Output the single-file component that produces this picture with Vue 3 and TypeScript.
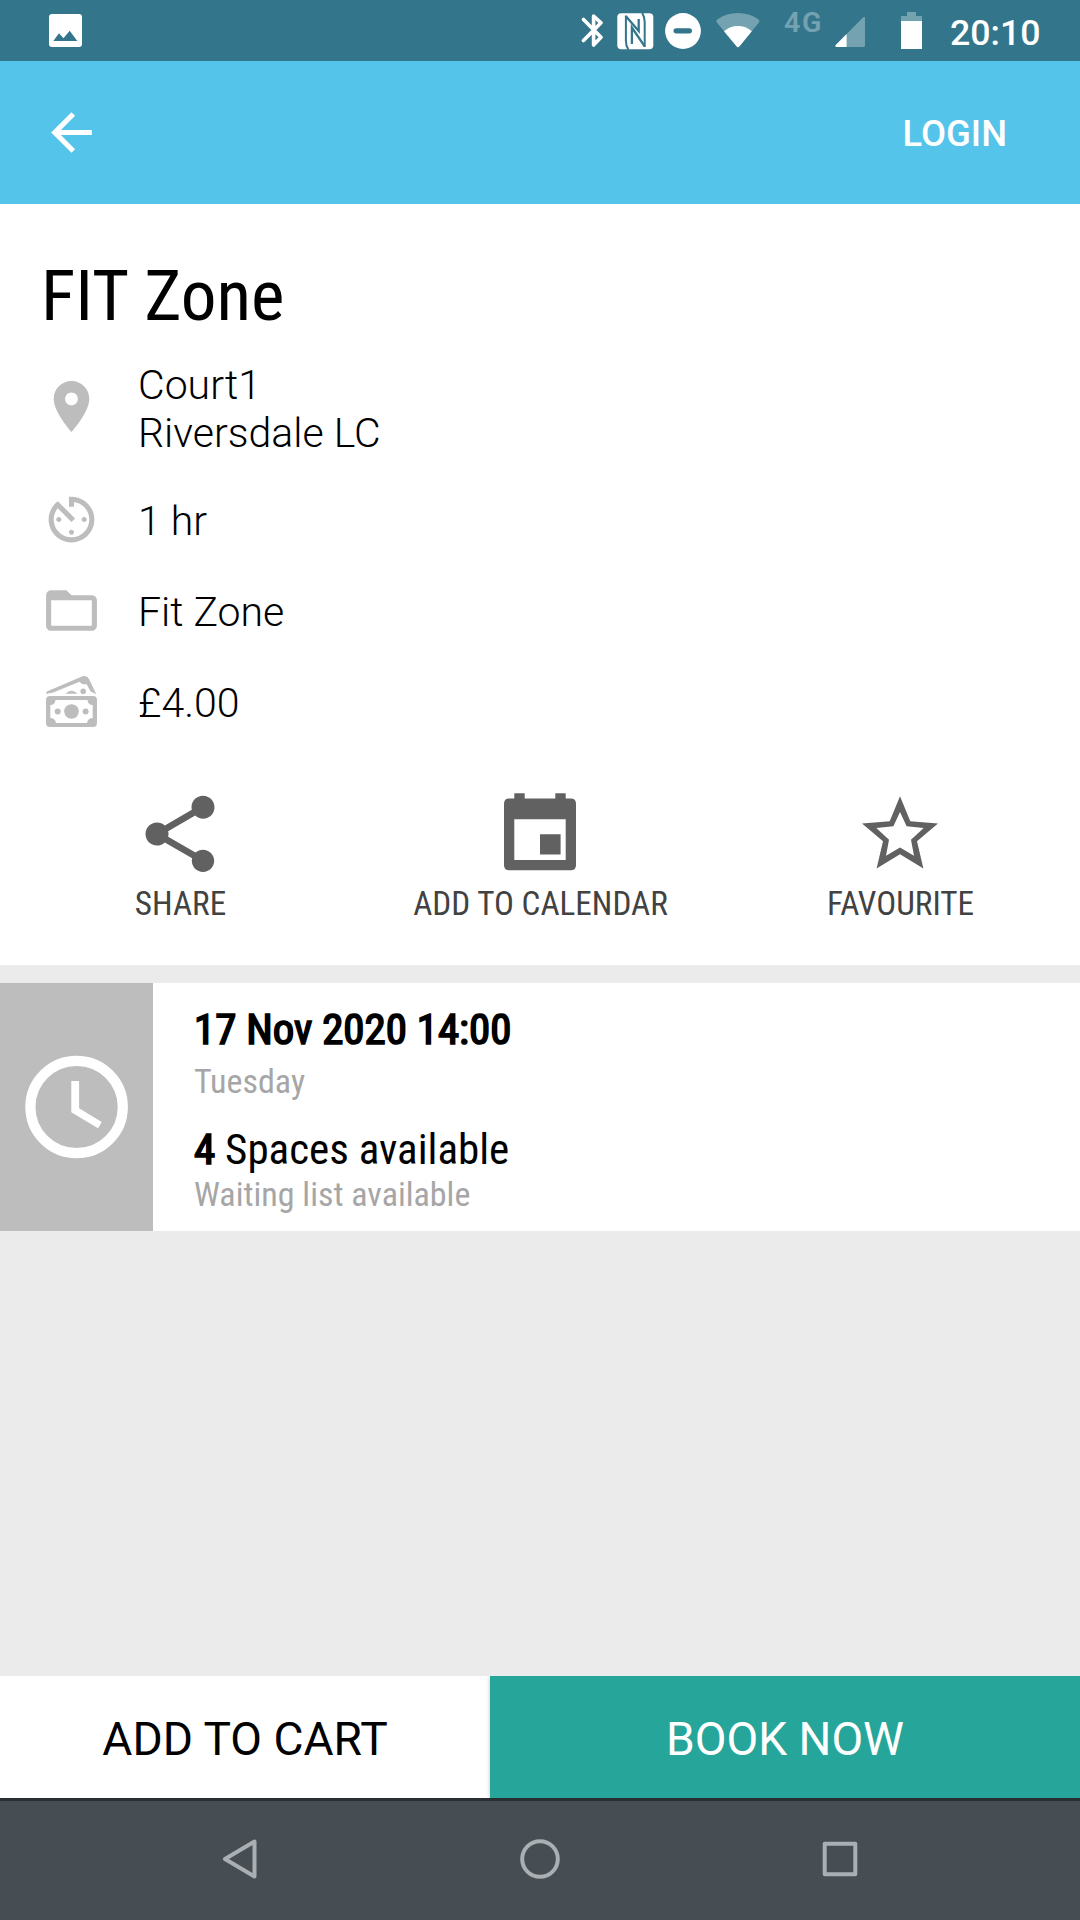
<script setup lang="ts">
interface Detail {
  icon: 'place' | 'timer' | 'folder' | 'money'
  lines: string[]
}

const details: Detail[] = [
  { icon: 'place', lines: ['Court1', 'Riversdale LC'] },
  { icon: 'timer', lines: ['1 hr'] },
  { icon: 'folder', lines: ['Fit Zone'] },
  { icon: 'money', lines: ['£4.00'] },
]
</script>

<template>
  <div class="screen">
    <header class="status">
      <svg class="picture" width="34" height="34" viewBox="0 0 34 34">
        <rect x="0" y="0" width="33" height="33" rx="3" fill="#fff" />
        <path d="M4.3 27 10 19.3 14.5 24.3 20.7 16.7 28.3 27z" fill="#33768c" />
      </svg>
      <div class="status-icons">
        <svg class="bt" width="24" height="37" viewBox="0 0 24 37" fill="none" stroke="#fff" stroke-width="3.6" stroke-linecap="round" stroke-linejoin="round">
          <path d="M2.5 7.5 20 25.2 12.6 33V4l7.4 6.8L2.5 28.5" />
        </svg>
        <svg class="nfc" width="37" height="37" viewBox="0 0 37 37">
          <rect x="0.3" y="0.3" width="36" height="36" rx="4" fill="#fff" />
          <path d="M8.9 2.6V28Q8.9 33 11.4 36.6M27.7 34V9Q27.7 4 25.2 0" fill="none" stroke="#33768c" stroke-width="2" />
          <path d="M8.9 3.2 21.7 18V6M14.9 31V14.6L27.7 33.4" fill="none" stroke="#33768c" stroke-width="2.3" />
        </svg>
        <svg class="dnd" width="36" height="36" viewBox="0 0 36 36">
          <circle cx="18" cy="18" r="17.9" fill="#fff" />
          <rect x="8.5" y="15.2" width="18.5" height="5.2" rx="2.6" fill="#33768c" />
        </svg>
        <svg class="wifi" width="44" height="35" viewBox="0 0 44 35" fill="#fff">
          <path d="M.7 9.2Q-.2 7.4 1.6 6.2 10.5 0 22 0T42.2 6.2Q44 7.4 42.9 9.4L23.5 33.3Q22 35 20.5 33.3z" opacity=".32" />
          <path d="M8 18.3Q14 13 22 13T35.8 18.3L23.5 33.3Q22 35 20.5 33.3z" />
        </svg>
        <span class="net">4G</span>
        <svg class="signal" width="31" height="31" viewBox="0 0 31 31" fill="#fff">
          <path d="M30 1V28.5Q30 30 28.5 30H1.5Q-.4 29.6.8 28L28 .6Q30-1 30 1z" opacity=".32" />
          <path d="M11.6 17V30H1.5Q-.4 29.6.8 28z" />
        </svg>
        <svg class="battery" width="21" height="37" viewBox="0 0 21 37" fill="#fff">
          <path d="M6 0h9v4h6v5H0V4h6z" opacity=".32" />
          <path d="M0 9h21v28H0z" />
        </svg>
        <span class="time">20:10</span>
      </div>
    </header>

    <nav class="appbar">
      <svg width="61" height="61" viewBox="0 0 24 24" fill="#fff">
        <path d="M20 11H7.83l5.59-5.59L12 4l-8 8 8 8 1.41-1.41L7.83 13H20v-2z" />
      </svg>
      <span class="login">LOGIN</span>
    </nav>

    <section class="summary">
      <h1 class="title">FIT Zone</h1>
      <ul class="details">
        <li v-for="d in details" :key="d.icon" :class="['row', d.icon]">
          <svg v-if="d.icon === 'place'" width="61" height="61" viewBox="0 0 24 24">
            <path d="M12 2C8.13 2 5 5.13 5 9c0 5.25 7 13 7 13s7-7.75 7-13c0-3.87-3.13-7-7-7zm0 9.5c-1.38 0-2.5-1.12-2.5-2.5s1.12-2.5 2.5-2.5 2.5 1.12 2.5 2.5-1.12 2.5-2.5 2.5z" />
          </svg>
          <svg v-else-if="d.icon === 'timer'" width="61" height="61" viewBox="0 0 24 24">
            <path d="M11 17c0 .55.45 1 1 1s1-.45 1-1-.45-1-1-1-1 .45-1 1zm0-14v4h2V5.08c3.39.49 6 3.39 6 6.92 0 3.87-3.13 7-7 7s-7-3.13-7-7c0-1.68.59-3.22 1.58-4.42L12 13l1.41-1.41-6.8-6.8v.02C4.42 6.45 3 9.05 3 12c0 4.97 4.02 9 9 9 4.97 0 9-4.03 9-9s-4.03-9-9-9h-1zm7 9c0-.55-.45-1-1-1s-1 .45-1 1 .45 1 1 1 1-.45 1-1zM6 12c0 .55.45 1 1 1s1-.45 1-1-.45-1-1-1-1 .45-1 1z" />
          </svg>
          <svg v-else-if="d.icon === 'folder'" width="61" height="61" viewBox="0 0 24 24">
            <path d="M20 6h-8l-2-2H4c-1.1 0-1.99.9-1.99 2L2 18c0 1.1.9 2 2 2h16c1.1 0 2-.9 2-2V8c0-1.1-.9-2-2-2zm0 12H4V8h16v10z" />
          </svg>
          <svg v-else width="61" height="61" viewBox="0 0 61 61">
            <path fill-rule="evenodd" d="M9 25H52Q56 25 56 29V52Q56 56 52 56H9Q5 56 5 52V29Q5 25 9 25zM14.5 29Q14 34 9.3 34V47Q14 47 15 52H46Q47 47 51.7 47V34Q47 34 46.5 29z" />
            <circle cx="30.5" cy="40.5" r="7.3" />
            <circle cx="16.7" cy="40.5" r="3" />
            <circle cx="44.6" cy="40.5" r="3" />
            <path fill-rule="evenodd" d="M5 23 5.8 20.6 41.5 5.3Q46 4 48 8L55.3 23.2 49.6 20.5 45.5 13Q41.5 14.5 38.5 10.8L12.3 21.5z" />
            <circle cx="42.2" cy="20.3" r="2.8" />
            <path d="M24.5 22.8Q30.5 16.5 36.5 22.8z" />
          </svg>
          <div class="lines">
            <span v-for="l in d.lines" :key="l">{{ l }}</span>
          </div>
        </li>
      </ul>

      <div class="actions">
        <button class="action">
          <svg width="92" height="92" viewBox="0 0 24 24">
            <path d="M18 16.08c-.76 0-1.44.3-1.96.77L8.91 12.7c.05-.23.09-.46.09-.7s-.04-.47-.09-.7l7.05-4.11c.54.5 1.25.81 2.04.81 1.66 0 3-1.34 3-3s-1.34-3-3-3-3 1.34-3 3c0 .24.04.47.09.7L8.04 9.81C7.5 9.31 6.79 9 6 9c-1.66 0-3 1.34-3 3s1.34 3 3 3c.79 0 1.5-.31 2.04-.81l7.12 4.16c-.05.21-.08.43-.08.65 0 1.61 1.31 2.92 2.92 2.92 1.61 0 2.92-1.31 2.92-2.92s-1.31-2.92-2.92-2.92z" />
          </svg>
          <span class="label">SHARE</span>
        </button>
        <button class="action">
          <svg width="92" height="92" viewBox="0 0 92 92">
            <path fill-rule="evenodd" d="M20.3 5.3h10.4v5.2h30.6V5.3h10.4v5.2h5Q82 10.5 82 15.8V77.2Q82 82.3 76.8 82.3H15.2Q10 82.3 10 77.2V15.8Q10 10.5 15.2 10.5h5.1zM20.3 31.2V72h51.4V31.2zM46 46.2h20.6V66.6H46z" />
          </svg>
          <span class="label">ADD TO CALENDAR</span>
        </button>
        <button class="action">
          <svg width="92" height="92" viewBox="0 0 92 92">
            <path fill-rule="evenodd" d="M46 8.3 56.3 33.3 84 35.6 63 53.3 69.4 80.4 46 66.2 22.6 80.4 29 53.3 8 35.6 35.7 33.3zM46 24 39.4 38.3 22.3 40 35 51.7 32 67.7 46 59.6 60 67.7 57 51.7 69.7 40 52.6 38.3z" />
          </svg>
          <span class="label">FAVOURITE</span>
        </button>
      </div>
    </section>

    <section class="slot">
      <div class="slot-icon">
        <svg width="104" height="104" viewBox="0 0 104 104">
          <circle cx="51.6" cy="52" r="46.2" fill="none" stroke="#fff" stroke-width="10.2" />
          <path d="M46.3 26h7.8v27.2L76.8 67l-3.8 6.3L46.3 57.3z" fill="#fff" />
        </svg>
      </div>
      <div class="slot-text">
        <span class="date">17 Nov 2020 14:00</span>
        <span class="muted day">Tuesday</span>
        <span class="spaces"><b>4</b> Spaces available</span>
        <span class="muted wait">Waiting list available</span>
      </div>
    </section>

    <footer class="buttons">
      <button class="cart"><span>ADD TO CART</span></button>
      <button class="book"><span>BOOK NOW</span></button>
    </footer>

    <div class="navbar">
      <svg width="300" height="48" viewBox="0 0 300 48"><path d="M164.5 6.5V41.5L135 24z" /></svg>
      <svg width="300" height="48" viewBox="0 0 300 48"><circle cx="150" cy="24" r="17.8" /></svg>
      <svg width="300" height="48" viewBox="0 0 300 48"><rect x="134.7" y="8.7" width="30.6" height="30.6" /></svg>
    </div>
  </div>
</template>

<style>
body { margin: 0; }
</style>

<style scoped>
.screen {
  width: 1080px;
  height: 1920px;
  display: flex;
  flex-direction: column;
  background: #ebebeb;
  font-family: Roboto, "Liberation Sans", sans-serif;
  color: #000;
  overflow: hidden;
  white-space: nowrap;
}
svg { display: block; flex: none; }
button { border: 0; padding: 0; margin: 0; background: none; font: inherit; color: inherit; }

.status {
  height: 61px;
  flex: none;
  background: #33768c;
  color: #fff;
  display: flex;
  justify-content: space-between;
  box-sizing: border-box;
  padding: 0 40px 0 49px;
}
.picture { margin-top: 14px; }
.status-icons { display: flex; align-items: flex-start; }
.bt { margin: 12px 12px 0 0; }
.nfc { margin: 12.5px 11.5px 0 0; }
.dnd { margin: 12.5px 15px 0 0; }
.wifi { margin: 13px 24px 0 0; }
.net { width: 51px; font-size: 28.5px; font-weight: 600; letter-spacing: 1.6px; line-height: 28px; margin-top: 9px; opacity: .32; }
.signal { margin: 17px 35px 0 0; }
.battery { margin: 12px 28px 0 0; }
.time { width: 90px; font-size: 35.7px; font-weight: 500; line-height: 42px; margin-top: 12px; }

.appbar {
  height: 143px;
  flex: none;
  background: #55c4ea;
  display: flex;
  align-items: center;
  justify-content: space-between;
  padding: 0 73px 0 41px;
}
.login { color: #fff; font-size: 36.4px; font-weight: 500; margin-top: 2px; }

.summary { height: 761px; flex: none; background: #fff; display: flex; flex-direction: column; }
.title, .label, .slot-text { font-family: "Roboto Condensed", Roboto, sans-serif; font-stretch: 75%; }
.title { margin: 51px 0 0 41px; font-size: 71.3px; font-weight: 400; line-height: 82px; }
.details { list-style: none; margin: 16px 0 0; padding: 0; }
.row { display: flex; align-items: center; height: 91px; padding-left: 41px; }
.row svg { fill: #bdbdbd; }
.place { height: 114px; margin-bottom: 7px; }
.place svg { margin-bottom: 7px; }
.lines { display: flex; flex-direction: column; margin-left: 36px; font-size: 41px; font-weight: 300; line-height: 48px; padding-top: 3px; }
.place .lines { padding: 0 0 2px; }

.actions { display: flex; margin-top: 41px; }
.action { flex: 1; display: flex; flex-direction: column; align-items: center; }
.action svg { fill: #616161; }
.label { color: #424242; font-size: 33.2px; line-height: 40px; margin-top: 4px; padding-left: 1px; }

.slot { height: 248px; flex: none; margin-top: 18px; background: #fff; display: flex; }
.slot-icon { width: 153px; background: #bdbdbd; display: flex; align-items: center; justify-content: center; }
.slot-text { display: flex; flex-direction: column; padding: 20px 0 0 41px; }
.date, .spaces b { font-weight: 400; -webkit-text-stroke: 1.7px #000; }
.date { font-size: 42.9px; line-height: 52px; }
.muted { color: #a6a6a6; font-size: 34px; line-height: 40px; }
.day { margin-top: 6px; }
.spaces { font-size: 43px; line-height: 50px; margin-top: 23px; }
.wait { margin-top: 0; }

.buttons { height: 122px; flex: none; margin-top: auto; display: flex; font-size: 46.1px; }
.buttons span { display: block; padding-top: 4px; }
.cart { width: 490px; background: #fff; }
.book { flex: 1; background: #26a69a; color: #fff; box-shadow: 0 0 4px rgba(0, 0, 0, .25); clip-path: inset(0 0 0 -5px); }

.navbar {
  height: 119px;
  flex: none;
  background: #464d53;
  border-top: 3px solid #292e33;
  box-sizing: content-box;
  display: flex;
  justify-content: center;
  align-items: flex-start;
}
.navbar svg { fill: none; stroke: #a9afb2; stroke-width: 4; stroke-linejoin: round; margin-top: 34px; }
</style>
